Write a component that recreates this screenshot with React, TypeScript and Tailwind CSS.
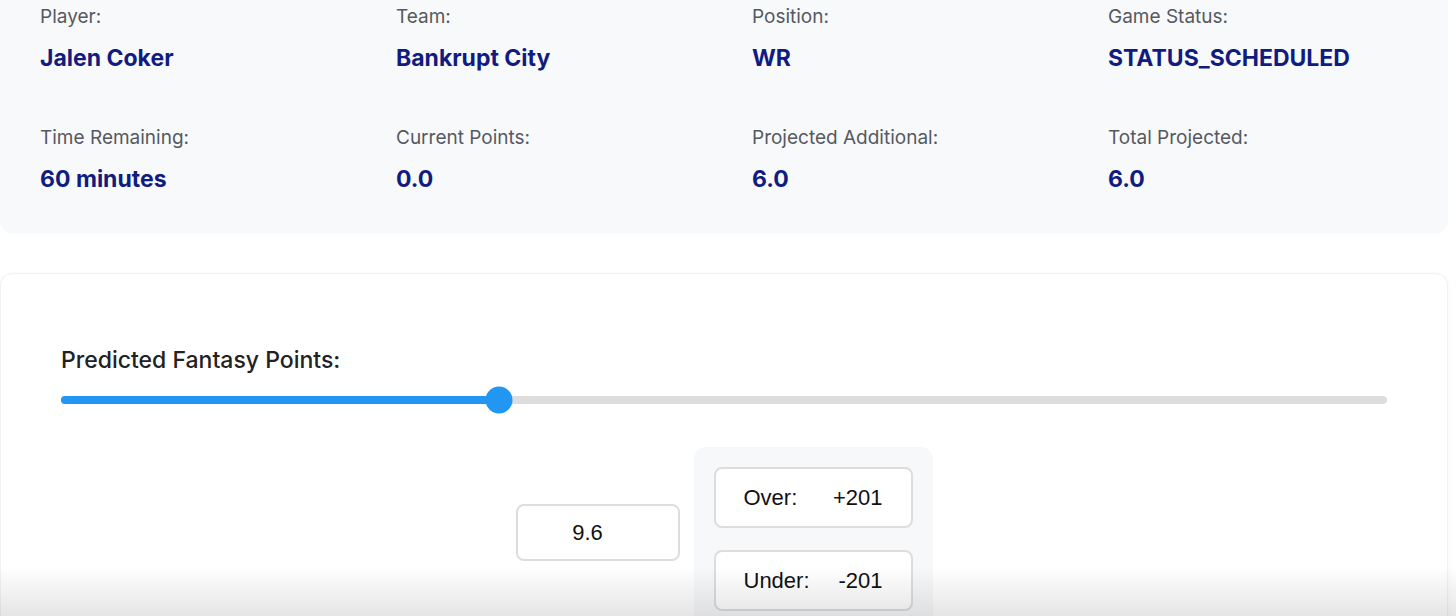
import React from 'react'

const stats = [
  { label: 'Player:', value: 'Jalen Coker' },
  { label: 'Team:', value: 'Bankrupt City' },
  { label: 'Position:', value: 'WR' },
  { label: 'Game Status:', value: 'STATUS_SCHEDULED' },
  { label: 'Time Remaining:', value: '60 minutes' },
  { label: 'Current Points:', value: '0.0' },
  { label: 'Projected Additional:', value: '6.0' },
  { label: 'Total Projected:', value: '6.0' },
]

const inter = { fontFamily: 'Inter, "Noto Sans", sans-serif' }
const arial = { fontFamily: '"Liberation Sans", Arial, sans-serif' }

function OddsButton({ label, odds }: { label: string; odds: string }) {
  return (
    <div className="flex h-[61px] w-[199px] items-center justify-between rounded-lg border-2 border-[#dddddd] bg-white px-[28px] text-[22px] text-[#111]" style={arial}>
      <span>{label}</span>
      <span>{odds}</span>
    </div>
  )
}

export default function App() {
  const pct = 33

  return (
    <div className="relative h-[616px] w-[1456px] overflow-hidden bg-white" style={inter}>
      {/* Summary card */}
      <div className="w-[1448px] rounded-b-xl bg-[#f8f9fb] px-10 pt-[3px] pb-[37px]">
        <div className="grid grid-cols-4 gap-x-[56px] gap-y-[49px]">
          {stats.map(s => (
            <div key={s.label} className="flex flex-col gap-3">
              <span className="text-[19px] leading-[27px] text-[#55595f]">{s.label}</span>
              <span className="text-[23px] font-bold leading-[33px] text-[#111c80]">{s.value}</span>
            </div>
          ))}
        </div>
      </div>

      {/* Prediction card */}
      <div className="mt-10 w-[1448px] rounded-xl border border-[#f1f2f4] bg-white px-[60px] pt-[70px] pb-10 shadow-[0_1px_4px_rgba(0,0,0,0.04)]">
        <div className="text-[23px] font-medium leading-[33px] text-[#222]">Predicted Fantasy Points:</div>

        <div className="relative mt-[19px] h-2 w-full rounded-full bg-[#dddddd]">
          <div className="h-2 rounded-full bg-[#2196f3]" style={{ width: `${pct}%` }} />
          <div className="absolute top-1/2 h-[27px] w-[27px] -translate-x-1/2 -translate-y-1/2 rounded-full bg-[#2196f3]" style={{ left: `${pct}%` }} />
        </div>

        <div className="mt-[43px] flex items-start justify-center gap-[14px]">
          <div className="mt-[57px] flex h-[57px] w-[164px] items-center justify-center rounded-lg border-2 border-[#dddddd] bg-white pr-5 text-[22px] text-[#111]" style={arial}>
            9.6
          </div>
          <div className="flex flex-col gap-[22px] rounded-xl bg-[#f7f8fa] p-5">
            <OddsButton label="Over:" odds="+201" />
            <OddsButton label="Under:" odds="-201" />
          </div>
        </div>
      </div>

      {/* bottom fade */}
      <div className="pointer-events-none absolute inset-x-0 bottom-0 h-[50px] bg-gradient-to-b from-transparent to-[rgba(0,0,0,0.1)]" />
    </div>
  )
}
